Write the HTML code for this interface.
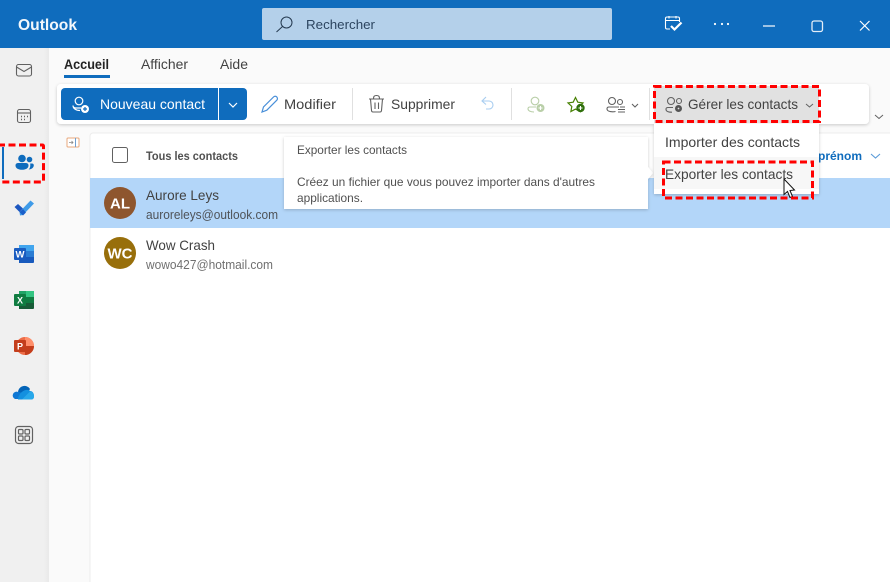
<!DOCTYPE html>
<html lang="fr"><head><meta charset="utf-8"><title>Outlook</title>
<style>
html,body{margin:0;padding:0;width:890px;height:582px;overflow:hidden;background:#fafafa}
svg{display:block}
text{font-family:"Liberation Sans",sans-serif;font-size:14px;fill:#424242}
</style></head><body>
<svg width="890" height="582" viewBox="0 0 890 582" xmlns="http://www.w3.org/2000/svg">
<defs>
<filter id="s" x="-5%" y="-20%" width="110%" height="140%"><feDropShadow dx="0" dy="1" stdDeviation="1.5" flood-color="#000" flood-opacity=".2"/></filter>
<linearGradient id="rail" x1="0" x2="1"><stop offset="0" stop-color="#f0f0f0"/><stop offset=".9" stop-color="#f0f0f0"/><stop offset="1" stop-color="#e9e9e9"/></linearGradient>
</defs>
<rect width="890" height="582" fill="#fafafa"/>
<rect y="48" width="49" height="534" fill="url(#rail)"/>
<!-- header -->
<rect width="890" height="48" fill="#0f6cbd"/>
<text x="18" y="30" textLength="59" lengthAdjust="spacingAndGlyphs" style="font-size:16px;font-weight:bold;fill:#f2f7fc">Outlook</text>
<rect x="262" y="8" width="350" height="32" rx="2" fill="#b4d0ea"/>
<g fill="none" stroke="#24394f" stroke-width="1"><circle cx="286.500" cy="22.500" r="5.500"/><path d="M282.500 26.500L276.500 32"/></g>
<text x="306" y="29" textLength="69" lengthAdjust="spacingAndGlyphs" style="font-size:13px;fill:#2c4560">Rechercher</text>
<g fill="none" stroke="#fff" stroke-width="1.100">
<path d="M670 29h-3a1.500 1.500 0 0 1-1.500-1.500V18.500a1.500 1.500 0 0 1 1.500-1.500h11a1.500 1.500 0 0 1 1.500 1.500V22"/><path d="M665.500 20.500h14M669 16v2.500M676 16v2.500"/>
<path d="M671 26l3.500 3.500 7-7" stroke-width="2.200"/>
</g>
<g fill="#fff"><circle cx="715" cy="24" r="1.100"/><circle cx="722" cy="24" r="1.100"/><circle cx="728" cy="24" r="1.100"/></g>
<path d="M763 26h12" stroke="#cfe0f1" stroke-width="1.500"/>
<rect x="812" y="21" width="10.500" height="10.500" rx="2" fill="none" stroke="#e4eef8" stroke-width="1.300"/>
<path d="M860 21l9.500 9.500M869.500 21L860 30.500" stroke="#fff" stroke-width="1.200"/>
<!-- rail icons -->
<g fill="none" stroke="#616161" stroke-width="1.100">
<rect x="16.500" y="64.500" width="15" height="11.500" rx="2"/><path d="M16.500 67l7.500 4.500 7.500-4.500"/>
<rect x="17.500" y="109.500" width="13" height="13" rx="2"/><path d="M17.500 113h13"/>
<path d="M21 116.500h1M24 116.500h1M27 116.500h1M21 119.500h1M24 119.500h1" stroke-width="1.500"/>
</g>
<rect x="2" y="147" width="2" height="32" fill="#0f6cbd"/>
<g fill="#0f6cbd" transform="translate(0,-2.500)"><circle cx="22" cy="161" r="3.800"/><path d="M15.500 168c0-2 1.500-2.500 3-2.500h7c1.500 0 3 .5 3 2.500 0 2.800-3 4.300-6.500 4.300s-6.500-1.500-6.500-4.300z"/><circle cx="29.500" cy="162" r="2.800"/><path d="M28.500 172c1.500-1 2-3 1.700-6h1.800c1.200 0 1.800.8 1.800 1.800 0 2.400-2.300 4.200-5.300 4.200z"/></g>
<path d="M14.500 207l3.500-3 5 4.500-3.500 3.500z" fill="#1c57c0"/><path d="M19.500 212l11-11.500 3.500 3-11 11.500-3 .5z" fill="#3f9be8"/><path d="M19.500 212l3.500 3.500 3-3-3-3.500z" fill="#1a5fc9"/>
<!-- word -->
<path d="M19 245h15v17a1 1 0 0 1-1 1H19z" fill="#185abd"/><path d="M19 245h15v6H19z" fill="#41a5ee"/><path d="M19 251h15v6H19z" fill="#2b7cd3"/>
<rect x="14" y="248" width="12" height="12" rx="1" fill="#1a5cc0"/><text x="15.500" y="257.500" textLength="9" lengthAdjust="spacingAndGlyphs" style="font-size:9px;font-weight:bold;fill:#fff">W</text>
<!-- excel -->
<path d="M19 291h15v17a1 1 0 0 1-1 1H19z" fill="#185c37"/><path d="M26 291h8v6h-8z" fill="#33c481"/><path d="M19 291h7v6h-7z" fill="#21a366"/><path d="M26 297h8v6h-8z" fill="#107c41"/>
<rect x="14" y="294" width="12" height="12" rx="1" fill="#107c41"/><text x="17" y="303.500" style="font-size:9px;font-weight:bold;fill:#fff">X</text>
<!-- ppt -->
<circle cx="25" cy="346" r="9" fill="#ed6c47"/><path d="M25 346h9a9 9 0 0 1-9 9z" fill="#c43e1c"/><path d="M25 337a9 9 0 0 1 9 9h-9z" fill="#ff8f6b"/>
<rect x="14" y="340" width="12" height="12" rx="1" fill="#c43e1c"/><text x="17" y="349.500" style="font-size:9px;font-weight:bold;fill:#fff">P</text>
<!-- onedrive -->
<path d="M18 392a6.500 6.500 0 0 1 12-3l-6 10z" fill="#0364b8"/><path d="M15 399a3.500 3.500 0 0 1 3-7c2 0 4 1 5 2l4 5z" fill="#0f78d4"/><path d="M18 398c2-7 9-10 12-7 3 0 4 3 4 5 0 2-1 3.500-3 3.500H18z" fill="#1490df"/><path d="M22 399.500l5-5 3-3c3 0 4 3 4 5 0 2-1 3-3 3z" fill="#28a8ea"/>
<!-- apps -->
<g fill="none" stroke="#616161" stroke-width="1.200"><rect x="15.500" y="426.500" width="17" height="17" rx="3"/><rect x="18.500" y="429.500" width="4.500" height="4.500" rx="1"/><rect x="25" y="429.500" width="4.500" height="4.500" rx="1"/><rect x="18.500" y="436" width="4.500" height="4.500" rx="1"/><rect x="25" y="436" width="4.500" height="4.500" rx="1"/></g>
<!-- tabs -->
<text x="64" y="69" textLength="45" lengthAdjust="spacingAndGlyphs" style="font-weight:bold;font-size:13.500px;fill:#242424">Accueil</text>
<rect x="64" y="75" width="46" height="3" fill="#0f6cbd"/>
<text x="141" y="69" textLength="47" lengthAdjust="spacingAndGlyphs" style="font-size:13.500px">Afficher</text>
<text x="220" y="69" textLength="28" lengthAdjust="spacingAndGlyphs" style="font-size:13.500px">Aide</text>
<!-- ribbon -->
<rect x="57" y="84" width="812" height="40" rx="4" fill="#fff" filter="url(#s)"/>
<rect x="61" y="88" width="186" height="32" rx="4" fill="#0f6cbd"/>
<rect x="218" y="88" width="1" height="32" fill="#fff"/>
<g fill="none" stroke="#fff" stroke-width="1.200"><circle cx="79" cy="101" r="3.800"/><path d="M81 108h-5c-2 0-3-1-3-2.500 0 3 3 5 7 5"/></g>
<circle cx="85" cy="109" r="4" fill="#fff"/><path d="M83 109h4M85 107v4" stroke="#0f6cbd" stroke-width="1.200"/>
<text x="100" y="109" textLength="105" lengthAdjust="spacingAndGlyphs" style="fill:#fff">Nouveau contact</text>
<path d="M229 103l4 4 4-4" fill="none" stroke="#fff" stroke-width="1.200"/>
<path d="M262 112l1.500-5 10-10c1-1 2.500-1 3.300 0s.8 2.300 0 3.200l-10 10z" fill="none" stroke="#4a90d9" stroke-width="1.200"/>
<text x="284" y="109" textLength="52" lengthAdjust="spacingAndGlyphs">Modifier</text>
<rect x="352" y="88" width="1" height="32" fill="#e0e0e0"/>
<g fill="none" stroke="#616161" stroke-width="1.100"><path d="M369 99h15M373.500 99c0-3 1-3.500 3-3.500s3 .5 3 3.500M370.500 99l1 11.500c.1 1 .8 1.500 1.500 1.500h7c.8 0 1.400-.5 1.500-1.500l1-11.500M375 102.500v6.500M378.500 102.500v6.500"/></g>
<text x="391" y="109" textLength="64" lengthAdjust="spacingAndGlyphs">Supprimer</text>
<path d="M486 97l-4 4 4 3.500M482 101h7a4 4 0 0 1 0 8h-3" fill="none" stroke="#a8cdf0" stroke-width="1.100"/>
<rect x="511" y="88" width="1" height="32" fill="#e0e0e0"/>
<g fill="none" stroke="#b9cfa8" stroke-width="1.100"><circle cx="535" cy="101" r="3.800"/><path d="M536 107h-6c-1.300 0-2 .8-2 1.800 0 2 2.500 3.200 6 3.200"/></g>
<circle cx="540.500" cy="108" r="4" fill="#b9cfa8"/><path d="M538.500 108h4M540.500 106v4" stroke="#fff" stroke-width="1.100"/>
<path d="M575.500 97.500l2.300 4.700 5.200.7-3.800 3.600.9 5-4.600-2.400-4.600 2.400.9-5-3.800-3.600 5.200-.7z" fill="none" stroke="#498205" stroke-width="1.200"/>
<circle cx="580.500" cy="108" r="4.200" fill="#2f6f0c"/><path d="M578.500 108h4M580.500 106v4" stroke="#fff" stroke-width="1.100"/>
<g fill="none" stroke="#616161" stroke-width="1.100"><circle cx="612" cy="101" r="3.500"/><circle cx="620" cy="102" r="2.500"/><path d="M619 107h-10c-1.300 0-2 .7-2 1.800 0 2 2.500 3 5.500 3 1 0 2 0 3-.3M618 109.500h7M618 112h7M620 107h5"/><path d="M632 104l3 3 3-3"/></g>
<rect x="649" y="88" width="1" height="32" fill="#e0e0e0"/>
<rect x="654" y="86" width="165" height="37" fill="#e1e1e1"/>
<g fill="none" stroke="#616161" stroke-width="1.100"><circle cx="671" cy="101" r="3.500"/><circle cx="679" cy="101" r="2.500"/><path d="M673 107.500h-5c-1.300 0-2 .7-2 1.700 0 2 2.500 3 6 3"/></g>
<circle cx="678.500" cy="108.500" r="2.200" fill="none" stroke="#555" stroke-width="2.600"/>
<text x="688" y="109" textLength="110" lengthAdjust="spacingAndGlyphs">Gérer les contacts</text>
<path d="M806 104l3.500 3 3.500-3" fill="none" stroke="#616161"/>
<path d="M875 115l4 3.500 4-3.500" fill="none" stroke="#616161"/>
<!-- collapse icon -->
<rect x="67" y="138" width="12" height="9" rx="1" fill="#fff" stroke="#e8a87c"/><path d="M75.500 138v9" stroke="#6f9fd0"/><path d="M69 142.500h4M71.500 141l1.500 1.500-1.500 1.500" fill="none" stroke="#888" stroke-width=".8"/>
<!-- list panel -->
<rect x="90" y="133" width="820" height="470" rx="3" fill="#fff" stroke="#ececec"/>
<rect x="112.500" y="147.500" width="15" height="15" rx="2" fill="#fff" stroke="#616161"/>
<text x="146" y="160" textLength="92" lengthAdjust="spacingAndGlyphs" style="font-size:12px;font-weight:bold;fill:#505050">Tous les contacts</text>
<text x="818" y="160" textLength="44" lengthAdjust="spacingAndGlyphs" style="font-size:12px;font-weight:bold;fill:#0f6cbd">prénom</text>
<path d="M871 154l4.500 4 4.500-4" fill="none" stroke="#5a9bd8" stroke-width="1.100"/>
<rect x="90" y="178" width="800" height="50" fill="#b3d6f9"/>
<circle cx="120" cy="203" r="16" fill="#8e562e"/>
<text x="120" y="208.500" text-anchor="middle" style="font-weight:bold;font-size:15px;fill:#fff">AL</text>
<text x="146" y="200" textLength="73" lengthAdjust="spacingAndGlyphs">Aurore Leys</text>
<text x="146" y="219" textLength="132" lengthAdjust="spacingAndGlyphs" style="font-size:12.500px;fill:#4f5358">aurorel​eys@outlook.com</text>
<circle cx="120" cy="253" r="16" fill="#986f0b"/>
<text x="120" y="258.500" text-anchor="middle" style="font-weight:bold;font-size:15px;fill:#fff">WC</text>
<text x="146" y="250" textLength="69" lengthAdjust="spacingAndGlyphs">Wow Crash</text>
<text x="146" y="269" textLength="127" lengthAdjust="spacingAndGlyphs" style="font-size:12.500px;fill:#707070">wowo427@hotmail.com</text>
<!-- tooltip -->
<path d="M284 137h364v30l5 6-5 6v30H284z" fill="#fff" filter="url(#s)"/>
<text x="297" y="154" textLength="110" lengthAdjust="spacingAndGlyphs" style="font-size:12px;fill:#505050">Exporter les contacts</text>
<text x="297" y="186" textLength="298" lengthAdjust="spacingAndGlyphs" style="font-size:12px;fill:#505050">Créez un fichier que vous pouvez importer dans d'autres</text>
<text x="297" y="202" textLength="66" lengthAdjust="spacingAndGlyphs" style="font-size:12px;fill:#505050">applications.</text>
<!-- dropdown -->
<rect x="654" y="124" width="165" height="70" fill="#fff" filter="url(#s)"/>
<rect x="654" y="157" width="165" height="32" fill="#f7f7f7"/>
<text x="665" y="147" textLength="135" lengthAdjust="spacingAndGlyphs">Importer des contacts</text>
<text x="665" y="179" textLength="128" lengthAdjust="spacingAndGlyphs">Exporter les contacts</text>
<!-- cursor -->
<path d="M784 179v15.500l3.500-3 2.500 6 2.500-1-2.500-6 4.500-.5z" fill="#fff" stroke="#111" stroke-width="1"/>
<!-- red dashes -->
<g fill="none" stroke="#f00" stroke-width="3" stroke-dasharray="7 3.500">
<rect x="654.500" y="86.500" width="165" height="35"/>
<rect x="663.500" y="162" width="149" height="36"/>
<rect x="-3" y="145" width="46.500" height="37" rx="1"/>
</g>
</svg>
</body></html>
